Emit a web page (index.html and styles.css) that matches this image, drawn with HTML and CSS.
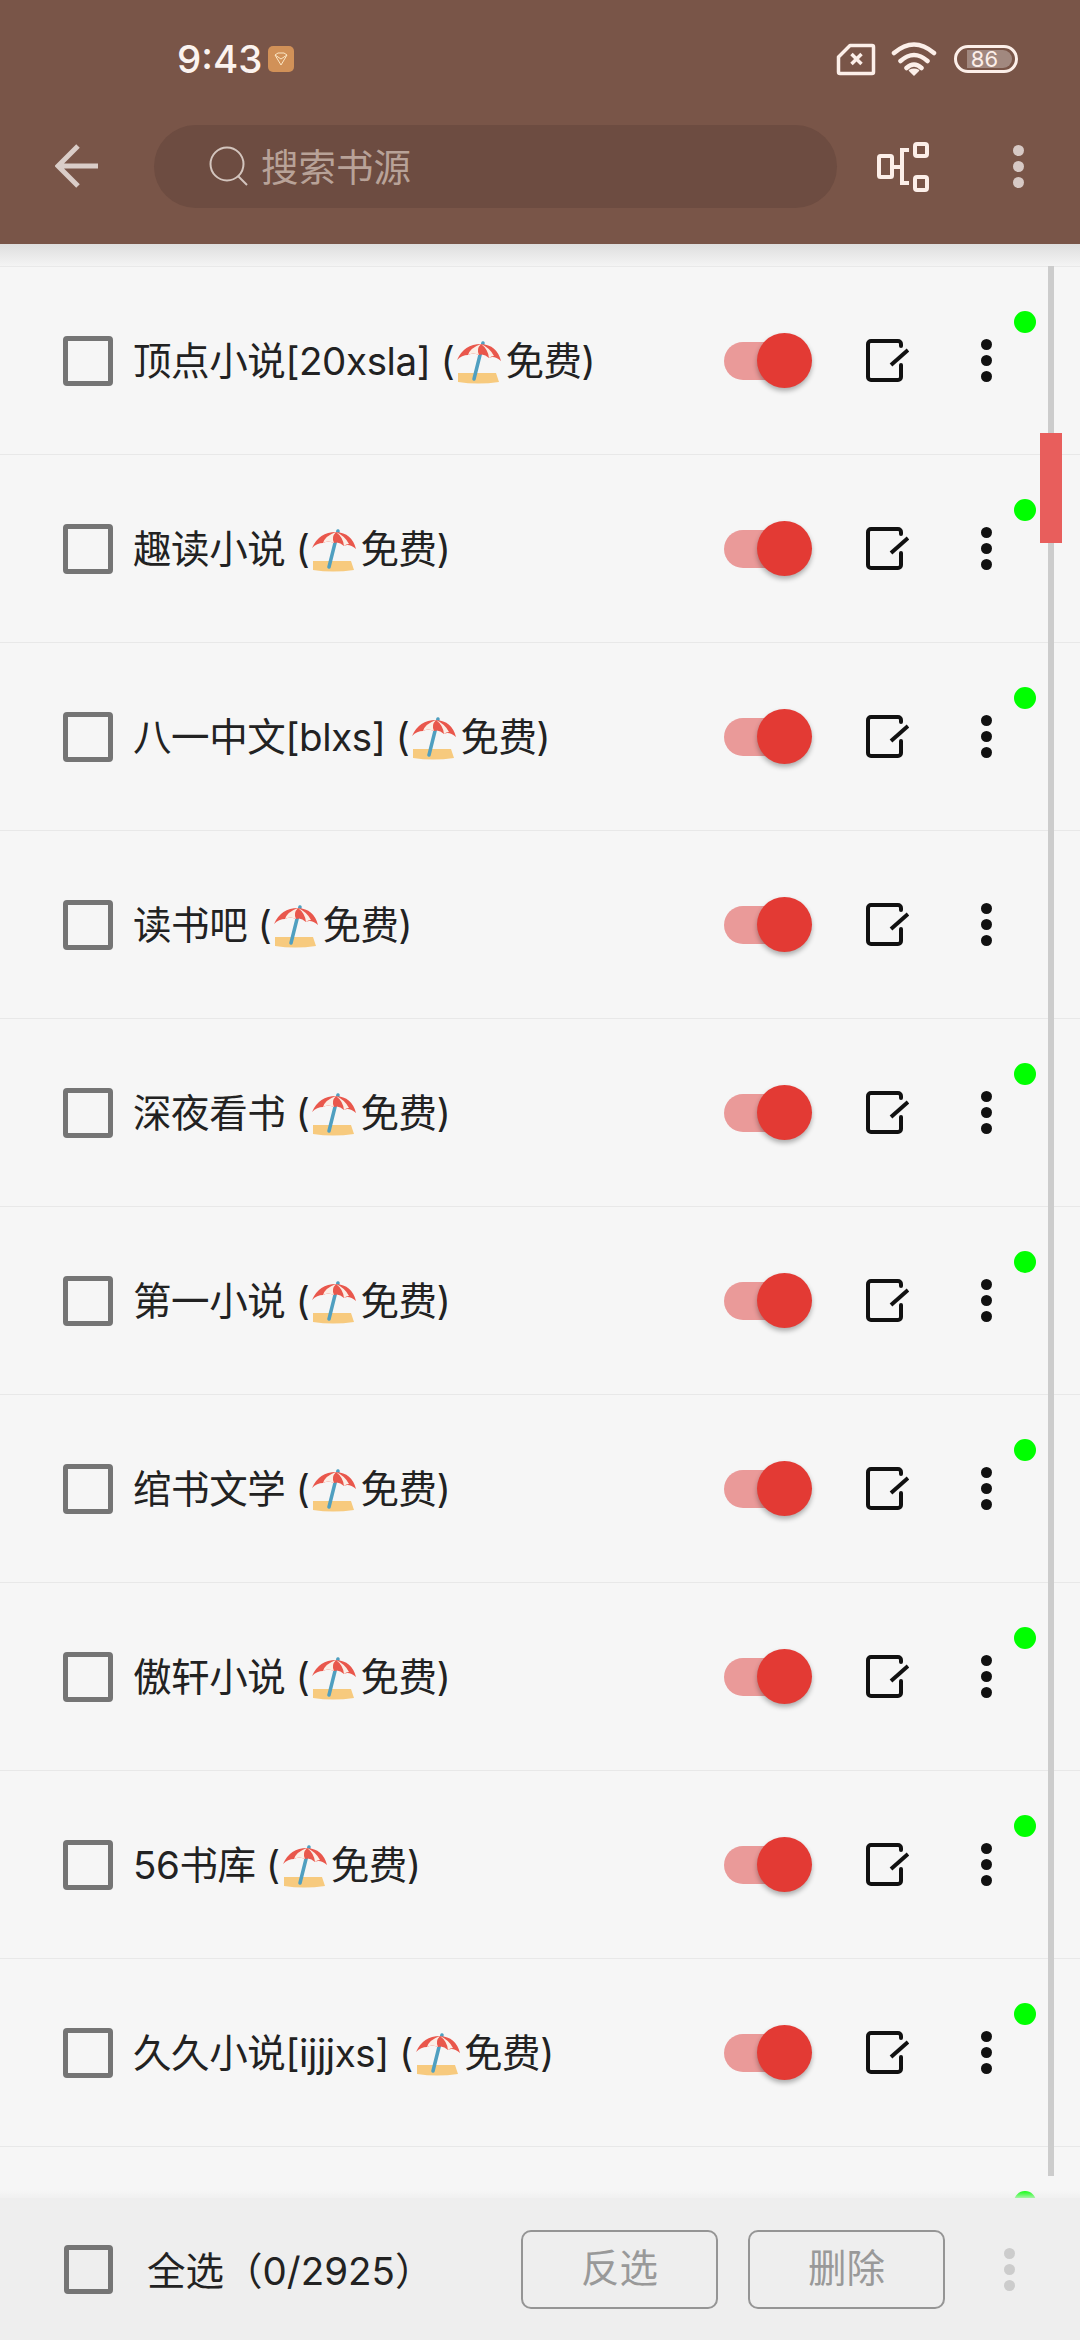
FILE: index.html
```html
<!doctype html>
<html lang="zh-CN">
<head>
    <meta charset="UTF-8">
    <meta name="viewport" content="width=device-width, initial-scale=1.0">
    <link rel="stylesheet" href="styles.css">
    <title>书源管理</title>
</head>
<body>
    <!-- shared icons -->
    <svg class="defs" width="0" height="0">
        <symbol id="umbrella" viewBox="0 0 46 46">
            <path d="M2 33h38l3 9q-21 3-41 0z" fill="#f7ca7e"/>
            <path d="M27 3L18 39" stroke="#4f9fc0" stroke-width="3.500" stroke-linecap="round"/>
            <path d="M1 20Q8 4 25 4 41 5 45 21 38 15 33 18 28 13 23 15 17 12 12 15 6 15 1 20z" fill="#e9574c"/>
            <path d="M12 15Q14 8 25 4 20 9 23 15 17 12 12 15zM25 4Q32 9 33 18 35 16 38 16 34 8 25 4z" fill="#fbeee6"/>
        </symbol>
        <symbol id="edit" viewBox="0 0 43 43">
            <path d="M35 7V5a3 3 0 0 0-3-3H5a3 3 0 0 0-3 3v33a3 3 0 0 0 3 3h27a3 3 0 0 0 3-3V26" fill="none" stroke="#111" stroke-width="4" stroke-linecap="round"/>
            <path d="M25 26L42 11" stroke="#111" stroke-width="4"/>
        </symbol>
    </svg>

    <header class="top">
        <div class="status">
            <span class="time">9:43</span>
            <span class="notice">
                <svg width="16" height="16" viewBox="0 0 16 16"><path d="M2 4l3-2h6l3 2-6 10zM2 4l6 4 6-4" fill="none" stroke="#fbe6c4" stroke-width="1"/></svg>
            </span>
            <span class="status-right">
                <svg width="40" height="33" viewBox="0 0 40 33"><path d="M14 2.500H36a1.500 1.500 0 0 1 1.500 1.500V29a1.500 1.500 0 0 1-1.500 1.500H4A1.500 1.500 0 0 1 2.500 29V14z" fill="none" stroke="#fcefe9" stroke-width="3.500" stroke-linejoin="round"/><path d="M15.500 11l10 10M25.500 11l-10 10" stroke="#fcefe9" stroke-width="3.500"/></svg>
                <svg width="46" height="36" viewBox="0 0 46 36"><path d="M3 12Q23-5 43 12M9.500 20Q23 8 36.500 20M15.500 27Q23 20 30.500 27" fill="none" stroke="#fcefe9" stroke-width="4.500" stroke-linecap="round"/><path d="M18.500 29.500Q23 27 27.500 29.500L23 34z" fill="#fcefe9" stroke="#fcefe9" stroke-width="1.500" stroke-linejoin="round"/></svg>
                <span class="battery"><span class="level">86</span></span>
            </span>
        </div>
        <div class="toolbar">
            <svg class="back" width="44" height="46" viewBox="0 0 44 46"><path d="M43 23H4M23 3L3 23l20 20" fill="none" stroke="#dacdc8" stroke-width="5"/></svg>
            <div class="search">
                <svg width="42" height="42" viewBox="0 0 42 42"><circle cx="19" cy="19" r="16.500" fill="none" stroke="#d3c5be" stroke-width="2"/><path d="M30 31l9 9" stroke="#d3c5be" stroke-width="2"/></svg>
                <span class="hint">搜索书源</span>
            </div>
            <svg class="group" width="52" height="52" viewBox="0 0 52 52"><g fill="none" stroke="#fcefe9" stroke-width="4"><rect x="2" y="16" width="13" height="21" rx="1.500"/><rect x="38" y="4" width="12" height="12" rx="2"/><rect x="38" y="37" width="12" height="13" rx="2"/><path d="M32 10H25V43H32M15 27H25"/></g></svg>
            <span class="dots light"><i></i><i></i><i></i></span>
        </div>
    </header>

    <main class="list">
        <div class="shade"></div>

        <div class="row">
            <span class="check"></span>
            <span class="name">顶点小说[20xsla] (<svg class="emoji"><use href="#umbrella"/></svg>免费)</span>
            <span class="switch"></span>
            <svg class="edit"><use href="#edit"/></svg>
            <span class="dots"><i></i><i></i><i></i></span>
            <span class="online"></span>
        </div>
        <div class="row">
            <span class="check"></span>
            <span class="name">趣读小说 (<svg class="emoji"><use href="#umbrella"/></svg>免费)</span>
            <span class="switch"></span>
            <svg class="edit"><use href="#edit"/></svg>
            <span class="dots"><i></i><i></i><i></i></span>
            <span class="online"></span>
        </div>
        <div class="row">
            <span class="check"></span>
            <span class="name">八一中文[blxs] (<svg class="emoji"><use href="#umbrella"/></svg>免费)</span>
            <span class="switch"></span>
            <svg class="edit"><use href="#edit"/></svg>
            <span class="dots"><i></i><i></i><i></i></span>
            <span class="online"></span>
        </div>
        <div class="row">
            <span class="check"></span>
            <span class="name">读书吧 (<svg class="emoji"><use href="#umbrella"/></svg>免费)</span>
            <span class="switch"></span>
            <svg class="edit"><use href="#edit"/></svg>
            <span class="dots"><i></i><i></i><i></i></span>
        </div>
        <div class="row">
            <span class="check"></span>
            <span class="name">深夜看书 (<svg class="emoji"><use href="#umbrella"/></svg>免费)</span>
            <span class="switch"></span>
            <svg class="edit"><use href="#edit"/></svg>
            <span class="dots"><i></i><i></i><i></i></span>
            <span class="online"></span>
        </div>
        <div class="row">
            <span class="check"></span>
            <span class="name">第一小说 (<svg class="emoji"><use href="#umbrella"/></svg>免费)</span>
            <span class="switch"></span>
            <svg class="edit"><use href="#edit"/></svg>
            <span class="dots"><i></i><i></i><i></i></span>
            <span class="online"></span>
        </div>
        <div class="row">
            <span class="check"></span>
            <span class="name">绾书文学 (<svg class="emoji"><use href="#umbrella"/></svg>免费)</span>
            <span class="switch"></span>
            <svg class="edit"><use href="#edit"/></svg>
            <span class="dots"><i></i><i></i><i></i></span>
            <span class="online"></span>
        </div>
        <div class="row">
            <span class="check"></span>
            <span class="name">傲轩小说 (<svg class="emoji"><use href="#umbrella"/></svg>免费)</span>
            <span class="switch"></span>
            <svg class="edit"><use href="#edit"/></svg>
            <span class="dots"><i></i><i></i><i></i></span>
            <span class="online"></span>
        </div>
        <div class="row">
            <span class="check"></span>
            <span class="name">56书库 (<svg class="emoji"><use href="#umbrella"/></svg>免费)</span>
            <span class="switch"></span>
            <svg class="edit"><use href="#edit"/></svg>
            <span class="dots"><i></i><i></i><i></i></span>
            <span class="online"></span>
        </div>
        <div class="row">
            <span class="check"></span>
            <span class="name">久久小说[ijjjxs] (<svg class="emoji"><use href="#umbrella"/></svg>免费)</span>
            <span class="switch"></span>
            <svg class="edit"><use href="#edit"/></svg>
            <span class="dots"><i></i><i></i><i></i></span>
            <span class="online"></span>
        </div>
        <div class="row">
            <span class="online"></span>
        </div>

        <div class="scroll-track"></div>
        <div class="scroll-thumb"></div>
    </main>

    <footer class="bottom">
        <span class="check small"></span>
        <span class="all">全选（0/2925）</span>
        <span class="btn">反选</span>
        <span class="btn">删除</span>
        <span class="dots grey"><i></i><i></i><i></i></span>
    </footer>
</body>
</html>
```

FILE: styles.css
```css
html, body {
    margin: 0;
    height: 100%;
}
body {
    display: flex;
    flex-direction: column;
    height: 2340px;
    overflow: hidden;
    background: #f6f6f6;
    color: #222;
    font-family: Inter, "Noto Sans CJK SC", sans-serif;
}
.defs {
    position: absolute;
}

/* top bar */
.top {
    flex: none;
    height: 244px;
    background: #795548;
}
.status {
    display: flex;
    align-items: center;
    box-sizing: border-box;
    height: 88px;
    padding: 30px 0 0 177px;
}
.time {
    width: 91px;
    color: #fbf3ef;
    font-size: 38.500px;
    font-weight: 500;
}
.notice {
    display: flex;
    align-items: center;
    justify-content: center;
    width: 26px;
    height: 26px;
    border-radius: 5px;
    background: #d19158;
}
.status-right {
    display: flex;
    align-items: center;
    gap: 15px;
    margin-left: 542px;
}
.battery {
    display: flex;
    box-sizing: border-box;
    width: 64px;
    height: 28px;
    margin-left: 2px;
    padding: 2px 3px 2px 10px;
    border: 3px solid #fcefe9;
    border-radius: 14px;
}
.level {
    flex: 1;
    padding-right: 10px;
    border-radius: 0 9px 9px 0;
    background: rgba(255, 255, 255, 0.3);
    color: #fcefe9;
    font-size: 22px;
    line-height: 18px;
    text-align: center;
}
.toolbar {
    display: flex;
    align-items: center;
    height: 156px;
}
.back {
    margin-left: 55px;
}
.search {
    display: flex;
    align-items: center;
    box-sizing: border-box;
    width: 683px;
    height: 83px;
    margin-left: 55px;
    padding-left: 54px;
    gap: 11px;
    border-radius: 42px;
    background: #6d4c41;
    color: #b8a298;
    font-size: 37.500px;
}
.hint {
    padding-bottom: 3px;
}
.group {
    margin-left: 40px;
}

/* three dots, used in rows, toolbar and footer */
.dots {
    display: flex;
    flex-direction: column;
    gap: 5px;
    margin-left: 72px;
}
.dots i {
    width: 11px;
    height: 11px;
    border-radius: 50%;
    background: #111;
}
.dots.light {
    margin-left: 84px;
}
.dots.light i {
    background: #d7c9c5;
}
.dots.grey {
    margin-left: 59px;
}
.dots.grey i {
    background: #ccc;
}

/* list */
.list {
    flex: 1;
    position: relative;
    overflow: hidden;
}
.shade {
    box-sizing: border-box;
    height: 23px;
    border-bottom: 1px solid #e9e9e9;
    background: linear-gradient(#dedede, #f4f4f4);
}
.row {
    position: relative;
    display: flex;
    align-items: center;
    box-sizing: border-box;
    height: 188px;
    padding-left: 63px;
    border-bottom: 1px solid #e8e8e8;
}
.check {
    flex: none;
    box-sizing: border-box;
    width: 50px;
    height: 50px;
    border: 5px solid #757575;
    border-radius: 4px;
}
.check.small {
    width: 49px;
    height: 49px;
    margin-left: 1px;
}
.name {
    flex: 1;
    margin-left: 20px;
    padding-bottom: 6px;
    font-size: 38.500px;
    letter-spacing: -0.4px;
    white-space: nowrap;
}
.emoji {
    width: 46px;
    height: 46px;
    margin: 0 3px 0 2px;
    vertical-align: -11px;
}
.switch {
    position: relative;
    flex: none;
    width: 78px;
    height: 38px;
    margin-right: 10px;
    border-radius: 19px;
    background: #ea9a99;
}
.switch::after {
    content: "";
    position: absolute;
    top: -9px;
    right: -10px;
    width: 55px;
    height: 55px;
    border-radius: 50%;
    background: #e33a34;
    box-shadow: 0 3px 5px rgba(0, 0, 0, 0.3);
}
.edit {
    flex: none;
    width: 43px;
    height: 43px;
    margin-left: 54px;
}
.row .dots {
    margin-right: 88px;
}
.online {
    position: absolute;
    top: 44px;
    left: 1014px;
    width: 22px;
    height: 22px;
    border-radius: 50%;
    background: #00ff00;
}
.scroll-track {
    position: absolute;
    top: 22px;
    left: 1048px;
    width: 6px;
    height: 1910px;
    background: #ccc;
}
.scroll-thumb {
    position: absolute;
    top: 189px;
    left: 1040px;
    width: 22px;
    height: 110px;
    background: #e85e5c;
}

/* footer */
.bottom {
    position: relative;
    flex: none;
    display: flex;
    align-items: center;
    box-sizing: border-box;
    height: 142px;
    padding-left: 63px;
    background: #eee;
}
.bottom::before {
    content: "";
    position: absolute;
    top: -8px;
    left: 0;
    right: 0;
    height: 8px;
    background: linear-gradient(rgba(238, 238, 238, 0), rgba(238, 238, 238, 0.7));
}
.all {
    width: 374px;
    margin-left: 34px;
    padding-bottom: 3px;
    font-size: 38.500px;
}
.btn {
    box-sizing: border-box;
    width: 197px;
    height: 79px;
    margin-right: 30px;
    border: 2px solid #959595;
    border-radius: 10px;
    color: #999;
    font-size: 38.500px;
    line-height: 73px;
    text-align: center;
}
.btn + .btn {
    margin-right: 0;
}
```
